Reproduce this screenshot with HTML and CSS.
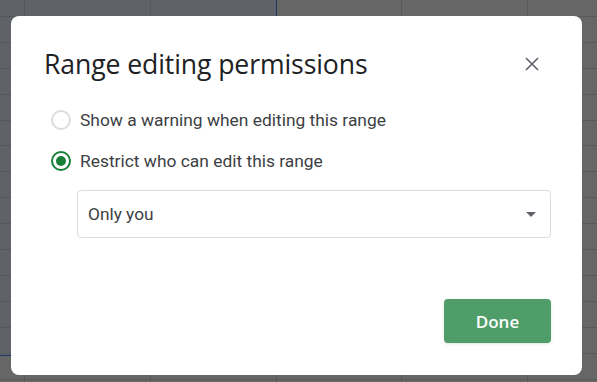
FILE: index.html
```html
<!DOCTYPE html>
<html>
<head>
<meta charset="utf-8">
<link rel="stylesheet" href="styles.css">
</head>
<body>
<div class="sheet">
  <div class="selection"></div>
</div>
<div class="dialog">
  <div class="header">
    <h1 class="title">Range editing permissions</h1>
    <button class="close" aria-label="Close">
      <svg width="14" height="14" viewBox="0 0 14 14"><path d="M1 1L13 13M13 1L1 13" stroke="#5f6368" stroke-width="1.6" fill="none"/></svg>
    </button>
  </div>
  <div class="options">
    <label class="option"><span class="radio"></span><span>Show a warning when editing this range</span></label>
    <label class="option"><span class="radio checked"></span><span>Restrict who can edit this range</span></label>
  </div>
  <div class="select">
    <span>Only you</span>
    <span class="caret"></span>
  </div>
  <div class="footer">
    <button class="done">Done</button>
  </div>
</div>
</body>
</html>
```

FILE: styles.css
```css
html, body {
  margin: 0;
  padding: 0;
  width: 597px;
  height: 382px;
  overflow: hidden;
}
body {
  position: relative;
  background: #666666;
  font-family: Roboto, "Liberation Sans", sans-serif;
}
.sheet {
  position: absolute;
  inset: 0;
  background-image:
    repeating-linear-gradient(to right, transparent 0 24px, rgba(0,0,0,0.13) 24px 25px, transparent 25px 125.75px),
    repeating-linear-gradient(to bottom, transparent 0 16px, rgba(0,0,0,0.13) 16px 17px, transparent 17px 25.9px);
}
.selection {
  position: absolute;
  left: 0;
  top: 0;
  width: 276px;
  height: 355px;
  background: rgba(60, 85, 130, 0.14);
  border-right: 1px solid #1c3764;
  border-bottom: 1px solid #1c3764;
}
.dialog {
  position: absolute;
  left: 11px;
  top: 16px;
  width: 571px;
  height: 359px;
  box-sizing: border-box;
  background: #fff;
  border-radius: 8px;
  padding: 0 31px 0 33px;
  display: flex;
  flex-direction: column;
}
.header {
  display: flex;
  align-items: center;
  justify-content: space-between;
  height: 98px;
  margin-bottom: -4px;
}
.title {
  margin: 0;
  font-family: "Open Sans", sans-serif;
  font-weight: 400;
  font-size: 26.6px;
  color: #202124;
  letter-spacing: -0.1px;
  line-height: 34px;
  padding-bottom: 2px;
}
.close {
  border: 0;
  background: none;
  padding: 0;
  width: 24px;
  height: 24px;
  display: flex;
  align-items: center;
  justify-content: center;
  margin-right: 7px;
  margin-bottom: 2px;
}
.options {
  display: flex;
  flex-direction: column;
  gap: 21px;
  padding-left: 7px;
}
.option {
  display: flex;
  align-items: center;
  gap: 9px;
  font-size: 17.4px;
  color: #3c4043;
  height: 20px;
}
.radio {
  width: 20px;
  height: 20px;
  box-sizing: border-box;
  border: 2px solid #dadce0;
  border-radius: 50%;
  display: flex;
  align-items: center;
  justify-content: center;
  flex: none;
}
.radio.checked {
  border-color: #188038;
}
.radio.checked::after {
  content: "";
  width: 10px;
  height: 10px;
  border-radius: 50%;
  background: #188038;
}
.select {
  margin: 19px 0 0 33px;
  height: 48px;
  box-sizing: border-box;
  border: 1px solid #dadce0;
  border-radius: 4px;
  display: flex;
  align-items: center;
  justify-content: space-between;
  padding: 0 14px 0 10px;
  font-size: 17.3px;
  color: #3c4043;
}
.caret {
  width: 0;
  height: 0;
  border-left: 5px solid transparent;
  border-right: 5px solid transparent;
  border-top: 5px solid #5f6368;
}
.footer {
  margin-top: auto;
  margin-bottom: 32px;
  display: flex;
  justify-content: flex-end;
}
.done {
  border: 0;
  width: 107px;
  height: 44px;
  border-radius: 4px;
  background: #4f9e69;
  color: #fff;
  font-family: "Open Sans", sans-serif;
  font-weight: 600;
  font-size: 17px;
  box-shadow: 0 1px 3px rgba(0,0,0,0.12);
}
```
